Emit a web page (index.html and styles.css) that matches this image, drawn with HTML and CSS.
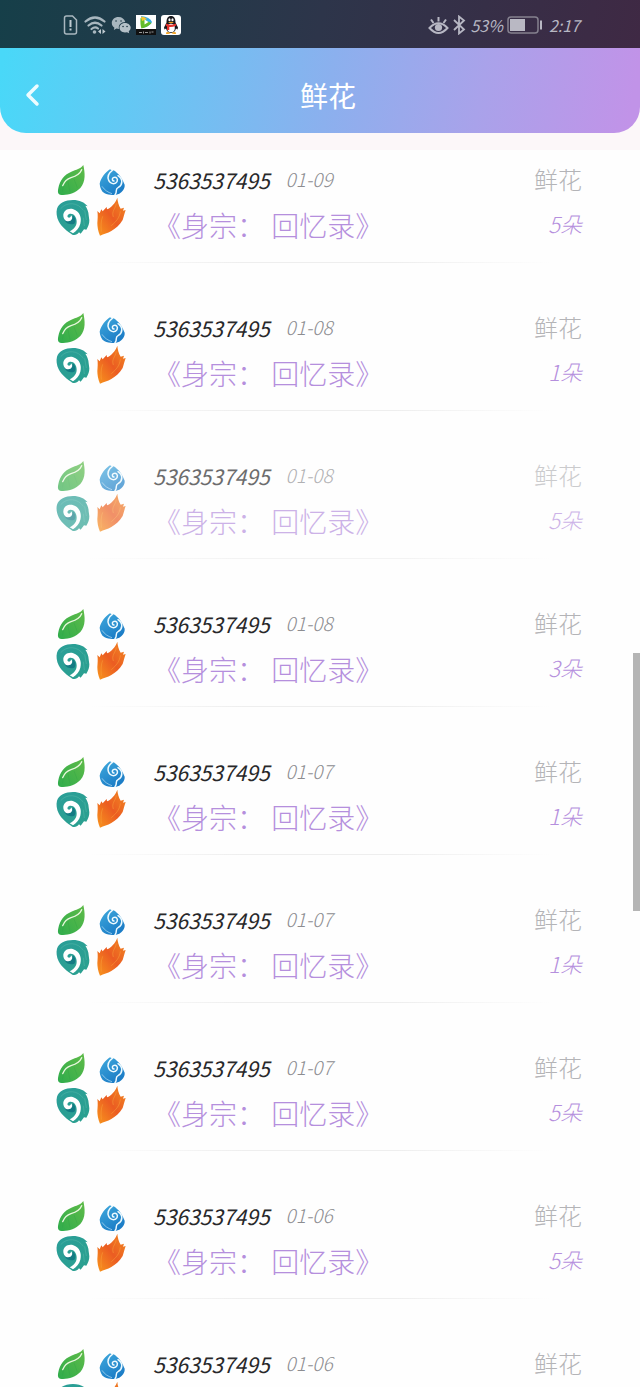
FILE: index.html
```html
<!DOCTYPE html>
<html lang="zh-CN">
<head>
<meta charset="utf-8">
<meta name="viewport" content="width=device-width, initial-scale=1">
<title>鲜花</title>
<link rel="stylesheet" href="styles.css">
</head>
<body>
<svg class="defs" aria-hidden="true">
  <defs>
    <linearGradient id="g-leaf" x1="0" y1="1" x2="1" y2="0"><stop offset="0" stop-color="#2fac4c"/><stop offset="1" stop-color="#5fbb48"/></linearGradient>
    <linearGradient id="g-water" x1="0" y1="0" x2=".6" y2="1"><stop offset="0" stop-color="#3fa9dc"/><stop offset="1" stop-color="#1b7cc6"/></linearGradient>
    <linearGradient id="g-wind" x1="0" y1="0" x2="1" y2="1"><stop offset="0" stop-color="#2a9e98"/><stop offset="1" stop-color="#2ba08f"/></linearGradient>
    <linearGradient id="g-fire" x1="0" y1="1" x2="1" y2="0"><stop offset="0" stop-color="#f8951d"/><stop offset=".5" stop-color="#eb5c22"/><stop offset="1" stop-color="#f28a22"/></linearGradient>
    <symbol id="avatar" viewBox="6 12 216 216">
      <path fill="url(#g-leaf)" d="M88 12C93 36 96 62 79 81C64 97 38 104 18 101C11 99 11 91 13 82C17 58 32 40 52 32C66 26 80 24 88 12Z"/>
      <path fill="none" stroke="#e9f7dd" stroke-width="4" stroke-linecap="round" d="M83 26C77 41 64 46 51 50C39 54 31 62 26 74"/>
      <path fill="none" stroke="#1d9540" stroke-width="2" opacity=".3" d="M28 74L26 92M42 62L48 92M60 54L70 80"/>
      <path fill="url(#g-water)" d="M168 25C174 30 180 26 186 33C198 42 206 56 212 71C213 85 204 92 196 98C183 104 164 103 152 97C142 91 138 80 137 68C141 50 154 34 168 25Z"/>
      <path fill="none" stroke="#eefaff" stroke-width="4.500" stroke-linecap="round" d="M175 28C164 36 160 48 164 58C169 70 184 71 189 62C193 53 186 46 178 50C173 53 175 60 180 60M192 44C208 54 206 72 193 79C181 85 192 90 183 101"/>
      <path fill="none" stroke="#bde3f6" stroke-width="2" d="M144 76C152 88 162 94 174 98"/>
      <path fill="url(#g-wind)" d="M9 143C14 127 34 117 57 117C76 117 92 124 101 136L94 134C99 142 104 152 104 163L106 178C106 188 103 197 97 206L90 205L80 218L75 214C70 221 62 224 55 221C40 211 22 198 14 181C8 168 6 154 9 143Z"/>
      <path fill="#137b83" d="M30 172C34 188 48 193 61 188C67 180 64 170 58 164L48 176Z"/>
      <path fill="#fff" d="M28 165C27 149 43 140 58 145C77 151 84 170 79 188C76 201 67 210 57 217L47 211C60 204 68 195 68 182C68 168 60 158 50 158C42 158 38 165 42 169C46 172 51 168 51 163C59 170 53 181 43 181C34 181 29 174 28 165Z"/>
      <path fill="none" stroke="#6fc7b3" stroke-width="2" opacity=".5" d="M20 143C39 121 72 124 88 148M92 148L97 177M88 170L91 195"/>
      <path fill="url(#g-fire)" d="M190 110C191 122 194 133 200 143L210 140L207 149L215 147C211 158 209 168 206 177C196 194 184 203 172 210C161 217 149 219 138 224C132 210 130 197 130 186C131 174 132 162 130 150L137 157L142 145L146 151L158 138L159 145C171 140 184 127 190 110Z"/>
      <path fill="none" stroke="#f9a23b" stroke-width="3" opacity=".5" d="M187 127C184 145 172 150 178 168M146 166C140 180 141 198 142 212M199 151C197 170 187 181 172 194"/>
    </symbol>
  </defs>
</svg>

<div class="top">
  <div class="status">
    <div class="status-group">
      <svg class="ic-sim" viewBox="0 0 16 20"><path d="M2 3q0-2 2-2h6l4 4v12q0 2-2 2H4q-2 0-2-2z" fill="none" stroke="#a9b7bf" stroke-width="1.500"/><path d="M8 5v7M8 13.500v2" stroke="#c0cbd1" stroke-width="2"/></svg>
      <svg class="ic-wifi" viewBox="0 0 22 20"><g fill="none" stroke="#a9b7bf" stroke-width="2.200" stroke-linecap="round"><path d="M1.500 6.500q9.500-8 19 0M4.500 10.500q6.500-5.500 13 0M7.500 14q3.500-3 6.500-.5"/></g><circle cx="10.500" cy="17" r="1.800" fill="#a9b7bf"/><path d="M17 14v5l-3-2.500zM18.500 14v5l3-2.500z" fill="#c0cbd1"/></svg>
      <svg class="ic-chat" viewBox="0 0 20 18"><path fill="#a9b7bf" d="M7.500 1C3.500 1 .8 3.700.8 7c0 2 1 3.600 2.600 4.700L2.800 14l2.700-1.400 2.500.4c-1-4 2-7 6.300-7C13.500 3 11 1 7.500 1z"/><path fill="#b4c0c7" d="M14 7c-3.300 0-5.500 2.200-5.500 4.800s2.400 4.700 5.500 4.700l2-.3 2.200 1.100-.5-1.900c1.200-.9 2-2.200 2-3.600C19.700 9.200 17.300 7 14 7z"/><path d="M5 5h.1M10 5h.1M12 10.500h.1M16 10.500h.1" stroke="#263f4c" stroke-width="1.600" stroke-linecap="round"/></svg>
      <svg class="ic-app" viewBox="0 0 20 20"><path fill="#fff" d="M0 0h20v15H0z"/><path fill="#111" d="M0 14h20v6H0z"/><path fill="#37aee6" d="M5 1q9 1 11 6-2 4-9 6z"/><path fill="#64bd2b" d="M4.500 3q-.5 7 1 10.500Q12 12 15.500 8z"/><path fill="#f7c62e" d="M5 1.500q4 0 6 2.500L6 6z"/><path fill="#fff" d="M8.500 4.500v5l4-2.500z"/><path d="M3 17.500h3M7.500 16.500v2M9 17.500h3M14 16.500v2M15.500 17h2" stroke="#999"/></svg>
      <svg class="ic-app" viewBox="0 0 20 20"><rect width="20" height="20" rx="3" fill="#fff"/><path fill="#17171c" d="M10 1C6.800 1 5.500 3.500 5.500 7.500L3 12.500l.5 2 1.500-1C6 17 8 18 10 18s4-1 5-4.500l1.500 1 .5-2-2.500-5C14.500 3.500 13.200 1 10 1z"/><ellipse cx="10" cy="13" rx="3.800" ry="4.300" fill="#fff"/><path fill="#e3322d" d="M5.300 8.500q4.700 2.400 9.400 0l.6 2q-4 2-7 1.500v3H6v-3.500l-1.300-1z"/><ellipse cx="8.500" cy="4.700" rx="1.100" ry="1.500" fill="#fff"/><ellipse cx="11.500" cy="4.700" rx="1.100" ry="1.500" fill="#fff"/><path fill="#f4a322" d="M7 7.200q3-1 6 0-3 2-6 0zM5 17.500q2.500-1.200 4.500.7-2 1.200-4.500.5zM15 17.500q-2.500-1.200-4.500.7 2 1.200 4.500.5z"/></svg>
    </div>
    <div class="status-group status-right">
      <svg class="ic-eye" viewBox="0 0 21 19"><path d="M1.500 12q9-9.500 18 0-9 10-18 0zM10.500 1v4.500M3 3.500l2.500 3.500M18 3.500L15.500 7" fill="none" stroke="#b7b7c3" stroke-width="2"/><circle cx="10.500" cy="11.500" r="3.600" fill="#b7b7c3"/></svg>
      <svg class="ic-bt" viewBox="0 0 13 20"><path d="M1 5l10 9.500-5 4v-17l5 4L1 15" fill="none" stroke="#b7b7c3" stroke-width="1.800"/></svg>
      <span>53%</span>
      <svg class="ic-battery" viewBox="0 0 36 18"><rect x="1" y="1" width="30" height="16" rx="3" fill="none" stroke="#85818f" stroke-width="1.500"/><path fill="#b9b8c3" d="M3 3h15v12H3zM33 4.500h2v9h-2z"/></svg>
      <time>2:17</time>
    </div>
  </div>
  <header class="bar">
    <button class="back" type="button" aria-label="返回"><svg viewBox="0 0 16 24"><path d="M13 3L4 12l9 9" fill="none" stroke="#eefcff" stroke-width="3.500" stroke-linecap="round" stroke-linejoin="round"/></svg></button>
    <h1>鲜花</h1>
  </header>
</div>

<main class="content">
  <ul class="records">
    <li class="record"><svg class="avatar"><use href="#avatar"/></svg><div class="info"><div class="line"><span class="uid">5363537495</span><time>01-09</time></div><p class="book">《身宗： 回忆录》</p></div><div class="gift"><span class="kind">鲜花</span><span class="count">5朵</span></div></li>
    <li class="record"><svg class="avatar"><use href="#avatar"/></svg><div class="info"><div class="line"><span class="uid">5363537495</span><time>01-08</time></div><p class="book">《身宗： 回忆录》</p></div><div class="gift"><span class="kind">鲜花</span><span class="count">1朵</span></div></li>
    <li class="record pressed"><svg class="avatar"><use href="#avatar"/></svg><div class="info"><div class="line"><span class="uid">5363537495</span><time>01-08</time></div><p class="book">《身宗： 回忆录》</p></div><div class="gift"><span class="kind">鲜花</span><span class="count">5朵</span></div></li>
    <li class="record"><svg class="avatar"><use href="#avatar"/></svg><div class="info"><div class="line"><span class="uid">5363537495</span><time>01-08</time></div><p class="book">《身宗： 回忆录》</p></div><div class="gift"><span class="kind">鲜花</span><span class="count">3朵</span></div></li>
    <li class="record"><svg class="avatar"><use href="#avatar"/></svg><div class="info"><div class="line"><span class="uid">5363537495</span><time>01-07</time></div><p class="book">《身宗： 回忆录》</p></div><div class="gift"><span class="kind">鲜花</span><span class="count">1朵</span></div></li>
    <li class="record"><svg class="avatar"><use href="#avatar"/></svg><div class="info"><div class="line"><span class="uid">5363537495</span><time>01-07</time></div><p class="book">《身宗： 回忆录》</p></div><div class="gift"><span class="kind">鲜花</span><span class="count">1朵</span></div></li>
    <li class="record"><svg class="avatar"><use href="#avatar"/></svg><div class="info"><div class="line"><span class="uid">5363537495</span><time>01-07</time></div><p class="book">《身宗： 回忆录》</p></div><div class="gift"><span class="kind">鲜花</span><span class="count">5朵</span></div></li>
    <li class="record"><svg class="avatar"><use href="#avatar"/></svg><div class="info"><div class="line"><span class="uid">5363537495</span><time>01-06</time></div><p class="book">《身宗： 回忆录》</p></div><div class="gift"><span class="kind">鲜花</span><span class="count">5朵</span></div></li>
    <li class="record"><svg class="avatar"><use href="#avatar"/></svg><div class="info"><div class="line"><span class="uid">5363537495</span><time>01-06</time></div></div><div class="gift"><span class="kind">鲜花</span></div></li>
  </ul>
  <div class="thumb"></div>
</main>
</body>
</html>
```
FILE: styles.css
```css
* { box-sizing: border-box; }

body {
  margin: 0;
  height: 100vh;
  display: flex;
  flex-direction: column;
  overflow: hidden;
  background: #fcf7f9;
  font-family: "Noto Sans CJK SC", sans-serif;
  font-weight: 300;
}

h1, p, ul { margin: 0; padding: 0; }
svg { display: block; flex: none; }
.defs { position: absolute; width: 0; height: 0; }

.top {
  flex: none;
  margin-bottom: 17px;
  border-radius: 0 0 26px 26px;
  background: linear-gradient(100deg, #49d8f8 2%, #8bb0ee 52%, #a9a2ea 75%, #c193e8 98%);
}

.status {
  height: 48px;
  padding: 2px 60px 0 62px;
  display: flex;
  justify-content: space-between;
  align-items: center;
  background: linear-gradient(100deg, #163f49, #2d354a 50%, #3f2944);
  color: #b7b7c3;
  font-family: "Noto Sans CJK SC", sans-serif;
  font-size: 16px;
  font-weight: 400;
  font-style: italic;
}
.status-group { display: flex; align-items: center; gap: 5px; }
.status-right { gap: 4px; }
.status-group time { margin-left: 2px; }
.ic-sim { width: 17px; height: 20px; }
.ic-wifi { width: 22px; height: 20px; }
.ic-chat { width: 20px; height: 18px; }
.ic-app { width: 20px; height: 20px; }
.ic-eye { width: 21px; height: 19px; }
.ic-bt { width: 13px; height: 20px; }
.ic-battery { width: 36px; height: 18px; }

.bar {
  height: 85px;
  padding: 0 20px;
  display: grid;
  grid-template-columns: 40px 1fr 24px;
  align-items: center;
  color: #fff;
}
.bar h1 {
  padding-top: 8px;
  text-align: center;
  font-size: 28px;
  line-height: 40px;
  font-weight: 400;
}
.back {
  width: 40px;
  height: 48px;
  padding: 8px 0 0 4px;
  border: 0;
  background: none;
}
.back svg { width: 16px; height: 24px; }

.content {
  position: relative;
  flex: 1;
  min-height: 0;
  overflow: hidden;
  background: #fefefe;
}
.records { list-style: none; }

.record {
  height: 148px;
  padding: 15px 58px 0 56px;
  display: flex;
  background: linear-gradient(90deg, transparent 14%, #eee 38%, #eee 62%, transparent 86%) 0 112px / 100% 1px no-repeat;
}
.pressed { opacity: .68; }

.avatar { width: 72px; height: 72px; margin-right: 25px; }
.info { flex: 1; }
.line { display: flex; gap: 16px; line-height: 30px; }
.uid {
  color: #28282a;
  font-size: 21px;
  font-weight: 400;
  font-style: italic;
}
.line time {
  color: #8c8c90;
  font-size: 19px;
  line-height: 28px;
  font-style: italic;
}
.book {
  margin-top: 10px;
  color: #b58fdd;
  font-size: 28px;
  line-height: 40px;
  white-space: nowrap;
}
.gift {
  display: flex;
  flex-direction: column;
  align-items: flex-end;
  gap: 14px;
  color: #b4b4b7;
  font-size: 24px;
  line-height: 28px;
}
.count {
  color: #b58fdd;
  font-size: 22px;
  line-height: 32px;
  font-style: italic;
}

.thumb {
  position: absolute;
  top: 503px;
  right: 0;
  width: 7px;
  height: 258px;
  background: #b5b5b5;
}
```
